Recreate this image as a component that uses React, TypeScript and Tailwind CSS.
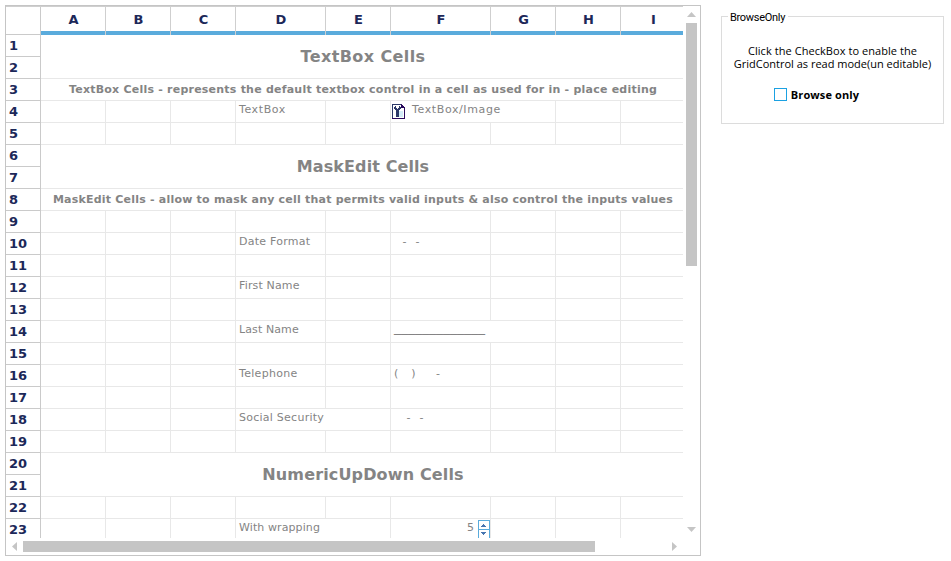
import type { ReactNode } from "react";

type Cell = { content?: ReactNode; spill?: boolean };
type Row =
  | { kind: "cells"; cells?: Record<string, Cell> }
  | { kind: "title"; text: string; tracking: string }
  | { kind: "subtitle"; text: string; tracking: string };

const columns = [
  { name: "A", width: "w-[65px]" },
  { name: "B", width: "w-[65px]" },
  { name: "C", width: "w-[65px]" },
  { name: "D", width: "w-[90px]" },
  { name: "E", width: "w-[65px]" },
  { name: "F", width: "w-[100px]" },
  { name: "G", width: "w-[65px]" },
  { name: "H", width: "w-[65px]" },
  { name: "I", width: "w-[65px]" },
];

const Label = ({ text, tracking }: { text: string; tracking: string }) => (
  <span className={`pl-[3px] ${tracking}`}>{text}</span>
);

function ToolIcon() {
  return (
    <svg width="13" height="15" viewBox="0 0 13 15" shapeRendering="crispEdges" className="mt-[3px] ml-px shrink-0">
      <path d="M0.5 0.5H9.5L12.5 3.5V14.5H0.5Z" fill="#fff" />
      <path d="M7 7H11V13H7Z" fill="#d3ecf7" />
      <path d="M0 0H10V1H1V14H0Z" fill="#2b3868" />
      <path d="M9 0H10V1H11V2H12V3H13V15H0V14H12V4H9Z" fill="#2a0a5c" />
      <path d="M3 2H4V4H5V5H6V4H7V2H8V3H9V5H8V6H7V13H4V6H3V5H2V3H3Z" fill="#2b3868" />
    </svg>
  );
}

function Spinner() {
  return (
    <span className="mt-px ml-[4px] block h-[20px] w-[12px] shrink-0 border border-[#5aabdc] bg-white">
      <svg width="10" height="18" viewBox="0 0 10 18" shapeRendering="crispEdges">
        <path d="M0 8H10V9H0Z" fill="#5aabdc" />
        <path d="M4 3H5V4H6V5H7V6H2V5H3V4H4Z" fill="#4775b0" />
        <path d="M2 11H7V12H6V13H5V14H4V13H3V12H2Z" fill="#4775b0" />
      </svg>
    </span>
  );
}

const rows: Row[] = [
  { kind: "title", text: "TextBox Cells", tracking: "tracking-[0.4px]" },
  {
    kind: "subtitle",
    text: "TextBox Cells - represents the default textbox control in a cell as used for in - place editing",
    tracking: "tracking-[0.222px]",
  },
  {
    kind: "cells",
    cells: {
      D: { content: <Label text="TextBox" tracking="tracking-[0.6px]" /> },
      F: {
        spill: true,
        content: (
          <>
            <ToolIcon />
            <span className="pl-[7px] tracking-[0.62px]">TextBox/Image</span>
          </>
        ),
      },
    },
  },
  { kind: "cells" },
  { kind: "title", text: "MaskEdit Cells", tracking: "tracking-[0.1px]" },
  {
    kind: "subtitle",
    text: "MaskEdit Cells - allow to mask any cell that permits valid inputs & also control the inputs values",
    tracking: "tracking-[0.21px]",
  },
  { kind: "cells" },
  {
    kind: "cells",
    cells: {
      D: { content: <Label text="Date Format" tracking="tracking-[0.25px]" /> },
      F: {
        content: (
          <>
            <span className="pl-[11.5px]">-</span>
            <span className="pl-[9px]">-</span>
          </>
        ),
      },
    },
  },
  { kind: "cells" },
  { kind: "cells", cells: { D: { content: <Label text="First Name" tracking="tracking-[0.15px]" /> } } },
  { kind: "cells" },
  {
    kind: "cells",
    cells: {
      D: { content: <Label text="Last Name" tracking="tracking-[0.1px]" /> },
      F: { spill: true, content: <span className="pl-[3px] text-[14px] leading-[13px]">_____________</span> },
    },
  },
  { kind: "cells" },
  {
    kind: "cells",
    cells: {
      D: { content: <Label text="Telephone" tracking="tracking-[0.3px]" /> },
      F: {
        content: (
          <>
            <span className="pl-[3px]">(</span>
            <span className="pl-[13px]">)</span>
            <span className="pl-[20.5px]">-</span>
          </>
        ),
      },
    },
  },
  { kind: "cells" },
  {
    kind: "cells",
    cells: {
      D: { spill: true, content: <Label text="Social Security" tracking="tracking-[0.25px]" /> },
      F: {
        content: (
          <>
            <span className="pl-[15.5px]">-</span>
            <span className="pl-[9px]">-</span>
          </>
        ),
      },
    },
  },
  { kind: "cells" },
  { kind: "title", text: "NumericUpDown Cells", tracking: "tracking-[0.14px]" },
  { kind: "cells" },
  {
    kind: "cells",
    cells: {
      D: { spill: true, content: <Label text="With wrapping" tracking="tracking-[0.1px]" /> },
      F: {
        content: (
          <>
            <span className="ml-auto">5</span>
            <Spinner />
          </>
        ),
      },
    },
  },
];

function GridRow({ row }: { row: Row }) {
  if (row.kind === "title") {
    return (
      <div className="h-[44px] border-b border-[#e8e8e8] pl-px text-center text-[16px] leading-[43px] font-bold whitespace-nowrap">
        <span className={row.tracking}>{row.text}</span>
      </div>
    );
  }
  if (row.kind === "subtitle") {
    return (
      <div className="flex h-[22px] justify-center border-b border-[#e8e8e8] pl-px text-[11px] leading-[21px] font-bold whitespace-nowrap">
        <span className={row.tracking}>{row.text}</span>
      </div>
    );
  }
  return (
    <div className="flex h-[22px] w-[645px] border-b border-[#e8e8e8] text-[11px] leading-[17px] whitespace-nowrap">
      {columns.map((c) => {
        const cell = row.cells?.[c.name];
        return (
          <div
            key={c.name}
            className={`flex h-[21px] shrink-0 items-start border-r ${c.width} ${cell?.spill ? "border-transparent" : "border-[#e8e8e8]"}`}
          >
            {cell?.content}
          </div>
        );
      })}
    </div>
  );
}

function Arrow({ dir }: { dir: "up" | "down" | "left" | "right" }) {
  const paths = {
    up: "M4.5 0L9 5H0Z",
    down: "M0 0H9L4.5 5Z",
    left: "M5 0V9L0 4.5Z",
    right: "M0 0L5 4.5L0 9Z",
  };
  const vertical = dir === "up" || dir === "down";
  return (
    <svg width={vertical ? 9 : 5} height={vertical ? 5 : 9} className="block shrink-0">
      <path d={paths[dir]} fill="#c5c5c5" />
    </svg>
  );
}

function GridControl() {
  return (
    <div className="flex h-[551px] w-[696px] flex-col border border-[#c5c5c5] bg-white font-['DejaVu_Sans',Verdana,sans-serif] text-[#848484]">
      <div className="flex h-[532px]">
        <div className="w-[677px] shrink-0 overflow-hidden border-t border-[#cfcfcf]">
          <div className="flex h-[28px] text-[13px] font-bold text-[#1c2859]">
            <div className="w-[35px] shrink-0 border-r border-b border-[#cacaca]" />
            {columns.map((c) => (
              <div
                key={c.name}
                className={`h-[28px] shrink-0 border-r border-[#cfcfcf] text-center leading-[25px] ${c.width}`}
              >
                <div className="h-[24px] pl-px">{c.name}</div>
                <div className="h-[4px] bg-[#5aabdc]" />
              </div>
            ))}
          </div>
          <div className="flex">
            <div className="w-[35px] shrink-0 border-r border-[#cacaca] text-[13px] leading-[21px] font-bold text-[#1c2859]">
              {Array.from({ length: 23 }, (_, i) => (
                <div key={i} className="h-[22px] border-b border-[#cacaca] pl-[3px]">
                  {i + 1}
                </div>
              ))}
            </div>
            <div className="w-[643px] shrink-0">
              {rows.map((row, i) => (
                <GridRow key={i} row={row} />
              ))}
            </div>
          </div>
        </div>
        <div className="flex w-[17px] flex-col items-center pt-[6px] pr-px">
          <Arrow dir="up" />
          <div className="mt-[6px] mb-[261px] h-[243px] w-[11px] shrink-0 bg-[#c5c5c5]" />
          <Arrow dir="down" />
        </div>
      </div>
      <div className="flex h-[17px] items-center pb-px pl-[6px]">
        <Arrow dir="left" />
        <div className="mr-[77px] ml-[6px] h-[11px] w-[572px] bg-[#c5c5c5]" />
        <Arrow dir="right" />
      </div>
    </div>
  );
}

function OptionsPanel() {
  return (
    <fieldset className="mt-[5px] ml-[20px] h-[114px] w-[223px] font-['Open_Sans','Segoe_UI',sans-serif] text-[11px] text-black">
      <div className="flex h-[114px] flex-col">
        <div className="flex h-[13px] shrink-0 items-start">
          <div className="mt-[6px] h-[7px] w-[7px] border-t border-l border-[#dcdcdc]" />
          <div className="w-[60px] pt-px pl-[2px] font-['Roboto',sans-serif] leading-[13px] tracking-[-0.3px] whitespace-nowrap">
            BrowseOnly
          </div>
          <div className="mt-[6px] h-[7px] grow border-t border-r border-[#dcdcdc]" />
        </div>
        <div className="flex grow flex-col items-center border-x border-b border-[#dcdcdc] pt-[21px]">
          <div className="text-center leading-[13px] whitespace-nowrap">
            <p className="h-[13px] tracking-[0.06px]">Click the CheckBox to enable the</p>
            <p className="h-[13px]">GridControl as read mode(un editable)</p>
          </div>
          <label className="mt-[18px] mr-[32px] flex h-[13px] items-center gap-[4px] leading-[13px]">
            <span className="h-[13px] w-[13px] border border-[#1ba1e2] bg-white" />
            <span className="font-bold tracking-[0.12px] whitespace-nowrap">Browse only</span>
          </label>
        </div>
      </div>
    </fieldset>
  );
}

export default function App() {
  return (
    <div className="flex h-[561px] w-[951px] items-start overflow-hidden bg-white pt-[5px] pl-[5px]">
      <GridControl />
      <OptionsPanel />
    </div>
  );
}
